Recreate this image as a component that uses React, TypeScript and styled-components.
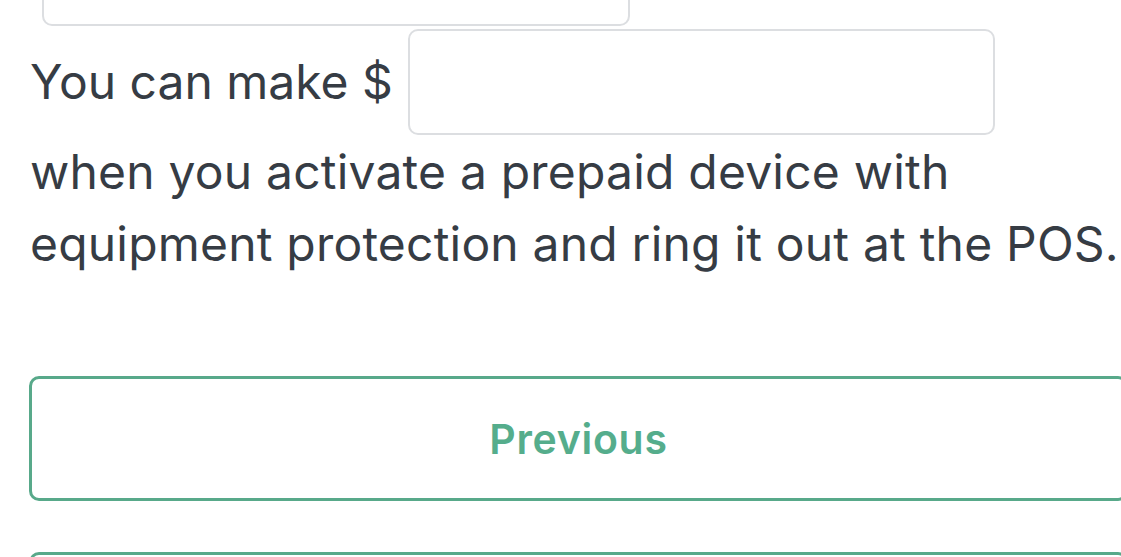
import React from "react";
import styled, { createGlobalStyle } from "styled-components";

const Global = createGlobalStyle`
  html, body {
    margin: 0;
    padding: 0;
    background: #ffffff;
    overflow: hidden;
  }
  body {
    font-family: Inter, "Noto Sans", "Liberation Sans", sans-serif;
    color: #363c44;
  }
`;

const Page = styled.div`
  width: 1099px;
  padding: 0 29px;
  display: flex;
  flex-direction: column;
`;

const PrevField = styled.div`
  margin-top: -79px;
  margin-left: 13px;
  width: 588px;
  height: 105px;
  box-sizing: border-box;
  border: 2px solid #dcdee1;
  border-radius: 10px;
  background: #fff;
`;

const Row = styled.div`
  display: flex;
  align-items: center;
  gap: 15px;
  margin-top: 3px;
`;

const Label = styled.span`
  font-size: 48px;
  line-height: 72px;
  letter-spacing: 0;
  padding-left: 1px;
`;

const AmountInput = styled.input`
  width: 587px;
  height: 106px;
  box-sizing: border-box;
  border: 2px solid #dcdee1;
  border-radius: 10px;
  background: #fff;
  outline: none;
  font: inherit;
  font-size: 46px;
  padding: 0 20px;
`;

const Body = styled.p`
  margin: 1px 0 0;
  font-size: 48px;
  line-height: 72px;
  letter-spacing: 0.2px;
  padding-left: 1px;
`;

const Actions = styled.div`
  display: flex;
  flex-direction: column;
  gap: 51px;
  margin-top: 96px;
`;

const OutlineButton = styled.button`
  width: 100%;
  height: 125px;
  box-sizing: border-box;
  border: 3px solid #58a98a;
  border-radius: 10px;
  background: #fff;
  color: #55ad8c;
  font-family: Inter, "Noto Sans", sans-serif;
  font-weight: 600;
  font-size: 41px;
  letter-spacing: 0.7px;
  cursor: pointer;
`;

export default function App() {
  return (
    <>
      <Global />
      <Page>
        <PrevField />
        <Row>
          <Label>You can make $</Label>
          <AmountInput type="text" aria-label="amount" />
        </Row>
        <Body>
          when you activate a prepaid device with
          <br />
          equipment protection and ring it out at the POS.
        </Body>
        <Actions>
          <OutlineButton>Previous</OutlineButton>
          <OutlineButton>Next</OutlineButton>
        </Actions>
      </Page>
    </>
  );
}
